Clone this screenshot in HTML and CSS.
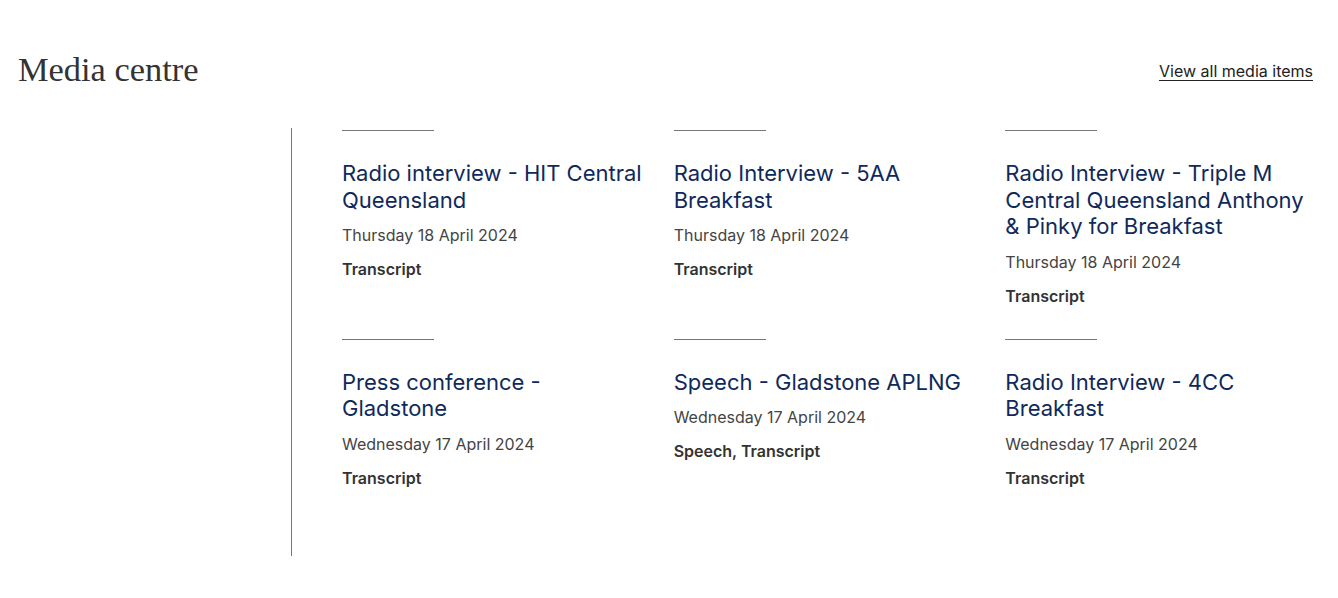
FILE: index.html
```html
<!DOCTYPE html>
<html lang="en">
<head>
<meta charset="utf-8">
<title>Media centre</title>
<link rel="stylesheet" href="styles.css">
</head>
<body>
<div class="page">
  <header class="head">
    <h2 class="title">Media centre</h2>
    <a class="all" href="#">View all media items</a>
  </header>
  <section class="main">
    <div class="side"></div>
    <div class="grid">
      <article class="item">
        <h3 class="item-title">Radio interview - HIT Central Queensland</h3>
        <p class="date">Thursday 18 April 2024</p>
        <p class="type">Transcript</p>
      </article>
      <article class="item">
        <h3 class="item-title">Radio Interview - 5AA Breakfast</h3>
        <p class="date">Thursday 18 April 2024</p>
        <p class="type">Transcript</p>
      </article>
      <article class="item">
        <h3 class="item-title">Radio Interview - Triple M Central Queensland Anthony &amp; Pinky for Breakfast</h3>
        <p class="date">Thursday 18 April 2024</p>
        <p class="type">Transcript</p>
      </article>
      <article class="item">
        <h3 class="item-title">Press conference - Gladstone</h3>
        <p class="date">Wednesday 17 April 2024</p>
        <p class="type">Transcript</p>
      </article>
      <article class="item">
        <h3 class="item-title">Speech - Gladstone APLNG</h3>
        <p class="date">Wednesday 17 April 2024</p>
        <p class="type">Speech, Transcript</p>
      </article>
      <article class="item">
        <h3 class="item-title">Radio Interview - 4CC Breakfast</h3>
        <p class="date">Wednesday 17 April 2024</p>
        <p class="type">Transcript</p>
      </article>
    </div>
  </section>
</div>
</body>
</html>
```

FILE: styles.css
```css
html, body {
  margin: 0;
  padding: 0;
  background: #fff;
}
body {
  font-family: Inter, "Liberation Sans", sans-serif;
  color: #333;
}
.page {
  padding: 46px 25px 0 18px;
}
.head {
  display: flex;
  justify-content: space-between;
  align-items: center;
  height: 46px;
}
.title {
  margin: 0;
  font-family: "Liberation Serif", "Times New Roman", serif;
  font-weight: 400;
  font-size: 34.4px;
  line-height: 46px;
  color: #333;
}
.all {
  font-size: 16px;
  color: #222;
  text-decoration: underline;
  text-underline-offset: 3px;
  position: relative;
  top: 2px;
}
.main {
  display: flex;
  margin-top: 36px;
}
.side {
  width: 273px;
  flex: none;
  border-right: 1px solid #777;
}
.grid {
  flex: 1;
  display: grid;
  grid-template-columns: repeat(3, 1fr);
  column-gap: 24px;
  row-gap: 31px;
  padding: 2px 0 66px 50px;
}
.item {
  position: relative;
  padding-top: 30px;
}
.item::before {
  content: "";
  position: absolute;
  top: 0;
  left: 0;
  width: 92px;
  height: 1px;
  background: #777;
}
.item-title {
  margin: 0;
  font-size: 22px;
  font-weight: 400;
  line-height: 26.5px;
  color: #0f2a5a;
}
.date {
  margin: 10px 0 0;
  font-size: 16px;
  line-height: 24px;
  color: #444;
}
.type {
  margin: 10px 0 0;
  font-size: 16px;
  font-weight: 600;
  line-height: 24px;
  color: #333;
}
```
